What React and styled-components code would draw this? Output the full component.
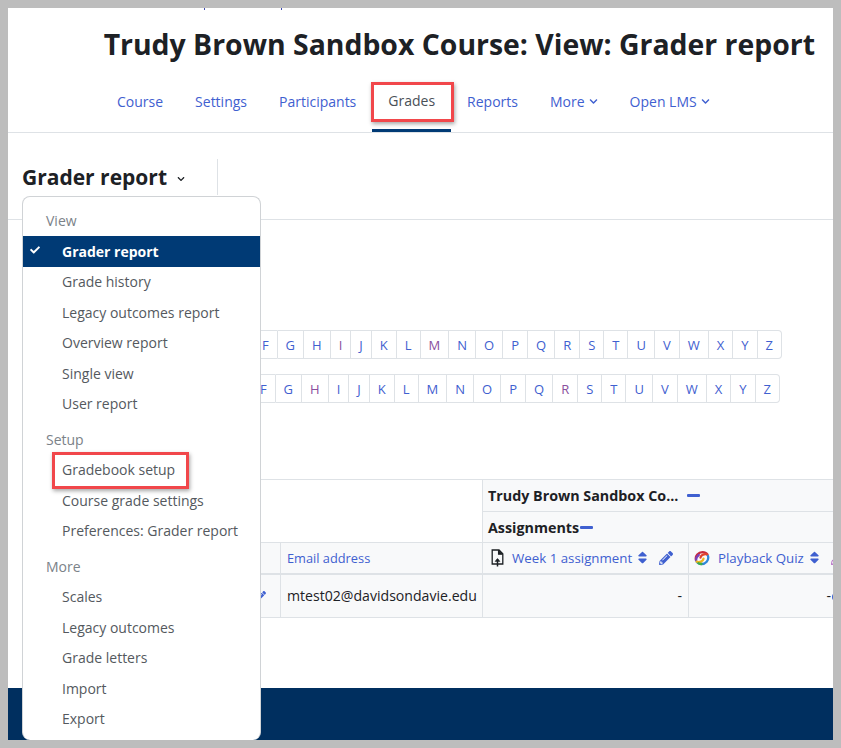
import React from 'react'
import styled, { createGlobalStyle } from 'styled-components'
import { FaCheck, FaChevronDown, FaPencilAlt, FaSort } from 'react-icons/fa'

const GlobalStyle = createGlobalStyle`
	html, body {
		margin: 0;
		padding: 0;
		background: #bdbdbd;
	}
	body {
		font-family: "Open Sans", "Noto Sans", "Liberation Sans", sans-serif;
		color: #1d2125;
	}
`

const LINK = '#3f60d0'

const Frame = styled.div`
	width: 841px;
	height: 748px;
	box-sizing: border-box;
	padding: 8px;
	background: #bdbdbd;
`

const Sheet = styled.div`
	position: relative;
	width: 825px;
	height: 732px;
	background: #fff;
	overflow: hidden;
	display: flex;
	flex-direction: column;
`

const Crumbs = styled.div`
	height: 3px;
	display: flex;
	gap: 76px;
	padding-left: 196px;
	span {
		width: 1px;
		height: 2px;
		background: #3f4bb0;
	}
`

const Heading = styled.h1`
	height: 61px;
	margin: 0;
	padding: 13px 18px 0 0;
	box-sizing: border-box;
	text-align: right;
	font-size: 28.4px;
	line-height: 40px;
	font-weight: 700;
	white-space: nowrap;
`

const Nav = styled.nav`
	height: 61px;
	box-sizing: border-box;
	border-bottom: 1px solid #dee2e6;
	padding-left: 93px;
	display: flex;
	align-items: stretch;
`

const Tab = styled.a`
	padding: 0 16px 2px;
	display: flex;
	align-items: center;
	gap: 4px;
	height: 60px;
	box-sizing: border-box;
	font-size: 14px;
	color: ${p => (p.$active ? '#495057' : LINK)};
	border-bottom: ${p => (p.$active ? '3px solid #003a75' : '0')};
	padding-top: ${p => (p.$active ? '1px' : '0')};
	svg {
		width: 9px;
		height: 9px;
		margin-top: 1px;
	}
`

const ReportBar = styled.div`
	position: relative;
	height: 87px;
	box-sizing: border-box;
	border-bottom: 1px solid #dee2e6;
	padding: 26px 0 0 14px;
	display: flex;
	align-items: flex-start;
`

const ReportTitle = styled.div`
	height: 36px;
	width: 196px;
	box-sizing: border-box;
	border-right: 1px solid #dee2e6;
	display: flex;
	align-items: center;
	gap: 10px;
	font-size: 21px;
	font-weight: 700;
	svg {
		width: 8px;
		height: 8px;
		margin-top: 3px;
	}
`

const Menu = styled.div`
	position: absolute;
	left: 14px;
	top: 63px;
	width: 239px;
	height: 544px;
	box-sizing: border-box;
	padding-top: 8px;
	background: #fff;
	border: 1px solid #d0d3d6;
	border-bottom: 0;
	border-radius: 8px;
	z-index: 2;
`

const MenuLabel = styled.div`
	height: 31px;
	margin-top: ${p => (p.$first ? '0' : '4.5px')};
	padding-left: 23px;
	display: flex;
	align-items: center;
	font-size: 14px;
	color: #7b8288;
`

const MenuItem = styled.div`
	position: relative;
	height: 30.5px;
	padding-left: 39px;
	display: flex;
	align-items: center;
	font-size: 14px;
	font-weight: ${p => (p.$active ? 700 : 400)};
	color: ${p => (p.$active ? '#fff' : '#54595e')};
	background: ${p => (p.$active ? '#003a75' : 'transparent')};
	svg {
		position: absolute;
		left: 7px;
		top: 9px;
		width: 10px;
		height: 10px;
	}
`

const Content = styled.div`
	padding-top: 110px;
	display: flex;
	flex-direction: column;
`

const LetterBar = styled.div`
	display: flex;
	justify-content: flex-end;
	margin-right: ${p => p.$right}px;
	margin-bottom: 15px;
`

const Letter = styled.a`
	height: 29px;
	box-sizing: border-box;
	padding: 0 8px;
	display: flex;
	align-items: center;
	font-size: 13px;
	color: ${p => (p.$visited ? '#8a4f9e' : LINK)};
	border: 1px solid #dee2e6;
	border-left-width: ${p => (p.$first ? '1px' : '0')};
	&:first-child {
		border-radius: 4px 0 0 4px;
	}
	&:last-child {
		border-radius: 0 4px 4px 0;
	}
`

const TableWrap = styled.div`
	margin: 61px 0 0 14px;
`

const Grades = styled.table`
	border-collapse: collapse;
	table-layout: fixed;
	width: 810px;
	font-size: 13.3px;
	td {
		border: 1px solid #dee2e6;
		padding: 0 6px 0 5px;
		box-sizing: border-box;
		white-space: nowrap;
		overflow: hidden;
	}
`

const Blank = styled.td`
	background: #fff;
`

const CategoryCell = styled.td`
	background: #f8f9fa;
	height: ${p => p.$height}px;
	font-weight: 700;
	font-size: 14.3px;
`

const HeadCell = styled.td`
	background: #f8f9fa;
	height: 31px;
	color: ${LINK};
	&& {
		border-bottom: 2px solid #dee2e6;
	}
`

const EmailHead = styled(HeadCell)`
	font-size: 12.8px;
	&& {
		padding-left: 6px;
	}
`

const BodyCell = styled.td`
	background: #f8f9fa;
	height: 44px;
	text-align: ${p => (p.$right ? 'right' : 'left')};
	font-size: 14.2px;
`

const EmailCell = styled(BodyCell)`
	font-size: 14.1px;
	&& {
		padding-left: 6px;
		padding-right: 0;
	}
`

const Collapse = styled.span`
	display: inline-block;
	width: 13px;
	height: 3px;
	margin-left: ${p => p.$gap}px;
	vertical-align: 4px;
	background: ${LINK};
	border-radius: 1px;
`

const HeadInner = styled.div`
	display: flex;
	align-items: center;
	svg {
		flex: none;
	}
`

const HeadLink = styled.span`
	margin-left: ${p => p.$gap}px;
`

const SortIcon = styled(FaSort)`
	width: 11px;
	height: 15px;
	margin-left: 5px;
`

const PencilIcon = styled(FaPencilAlt)`
	width: 14px;
	height: 14px;
	margin-left: 11px;
	color: ${p => p.$tint || LINK};
`

const RowPencil = styled(FaPencilAlt)`
	width: 10px;
	height: 10px;
	color: ${LINK};
	margin-left: -8px;
`

const Dot = styled.span`
	display: inline-block;
	width: 8px;
	height: 8px;
	margin-left: 1px;
	border-radius: 50%;
	background: ${LINK};
`

const Footer = styled.footer`
	height: 52px;
	margin-top: auto;
	background: #002f5f;
`

const Highlight = styled.div`
	position: absolute;
	left: ${p => p.$x}px;
	top: ${p => p.$y}px;
	width: ${p => p.$w}px;
	height: ${p => p.$h}px;
	box-sizing: border-box;
	border: 3px solid #f1474b;
	box-shadow: 1px 2px 4px rgba(0, 0, 0, 0.35);
	z-index: 3;
`

const UploadIcon = styled.svg`
	margin-left: 3px;
`

const LETTERS = [...'FGHIJKLMNOPQRSTUVWXYZ']
const REPORTS = ['Grade history', 'Legacy outcomes report', 'Overview report', 'Single view', 'User report']
const SETUP = ['Gradebook setup', 'Course grade settings', 'Preferences: Grader report']
const MORE = ['Scales', 'Legacy outcomes', 'Grade letters', 'Import', 'Export']

function LetterRow({ right, visited }) {
	return (
		<LetterBar $right={right}>
			{LETTERS.map((l, i) => (
				<Letter key={l} $first={i === 0} $visited={visited.includes(l)}>{l}</Letter>
			))}
		</LetterBar>
	)
}

export default function App() {
	return (
		<Frame>
			<GlobalStyle />
			<Sheet>
				<Crumbs><span /><span /></Crumbs>
				<Heading>Trudy Brown Sandbox Course: View: Grader report</Heading>
				<Nav>
					<Tab>Course</Tab>
					<Tab>Settings</Tab>
					<Tab>Participants</Tab>
					<Tab $active>Grades</Tab>
					<Tab>Reports</Tab>
					<Tab>More <FaChevronDown /></Tab>
					<Tab>Open LMS <FaChevronDown /></Tab>
				</Nav>
				<ReportBar>
					<ReportTitle>Grader report <FaChevronDown /></ReportTitle>
					<Menu>
						<MenuLabel $first>View</MenuLabel>
						<MenuItem $active><FaCheck />Grader report</MenuItem>
						{REPORTS.map(r => <MenuItem key={r}>{r}</MenuItem>)}
						<MenuLabel>Setup</MenuLabel>
						{SETUP.map(r => <MenuItem key={r}>{r}</MenuItem>)}
						<MenuLabel>More</MenuLabel>
						{MORE.map(r => <MenuItem key={r}>{r}</MenuItem>)}
					</Menu>
				</ReportBar>
				<Content>
					<LetterRow right={51} visited={['I', 'M']} />
					<LetterRow right={53} visited={['H', 'R']} />
					<TableWrap>
						<Grades>
							<colgroup>
								<col style={{ width: 236 }} />
								<col style={{ width: 22 }} />
								<col style={{ width: 202 }} />
								<col style={{ width: 206 }} />
								<col style={{ width: 158 }} />
							</colgroup>
							<tbody>
								<tr>
									<Blank colSpan={3} rowSpan={2} />
									<CategoryCell colSpan={2} $height={32}>Trudy Brown Sandbox Co...<Collapse $gap={9} /></CategoryCell>
								</tr>
								<tr>
									<CategoryCell colSpan={2} $height={31}>Assignments<Collapse $gap={1} /></CategoryCell>
								</tr>
								<tr>
									<HeadCell />
									<HeadCell />
									<EmailHead>Email address</EmailHead>
									<HeadCell>
										<HeadInner>
											<UploadIcon width="13" height="18" viewBox="0 0 13 18" fill="none" stroke="#1d2125" strokeWidth="1.3">
												<path d="M1.2 1h6.8l3.800 3.800v10.200H1.200z" />
												<path d="M7.600 1v4.200h4.200" fill="#1d2125" />
												<path d="M6.500 17.500V10" strokeWidth="1.500" />
												<path d="M4 12.400l2.500-3 2.500 3z" fill="#1d2125" strokeWidth="0.500" />
											</UploadIcon>
											<HeadLink $gap={8}>Week 1 assignment</HeadLink>
											<SortIcon />
											<PencilIcon />
										</HeadInner>
									</HeadCell>
									<HeadCell>
										<HeadInner>
											<svg width="16" height="16" viewBox="0 0 16 16" fill="none" strokeWidth="2.300" strokeLinecap="round">
												<path d="M2 10C.8 5.500 4.500 2.200 8.500 2.200c2 0 3.800.8 4.800 2.300" stroke="#c72a3d" />
												<path d="M2 10c.2-2.500 1.400-4 2.800-5" stroke="#7b3fb8" />
												<path d="M13.300 4.500C10.500 3.500 7 4.800 6.500 7.500" stroke="#e0442e" />
												<path d="M14 6c1.200 4.500-2.500 8-6.500 8-2 0-3.800-.8-4.800-2.300" stroke="#2f86d9" />
												<path d="M2.700 11.700c2.800 1 6.300-.3 6.800-3" stroke="#f0b31e" />
												<path d="M4.500 13.200c1 .6 2 .8 3 .8" stroke="#3dae4c" />
											</svg>
											<HeadLink $gap={8}>Playback Quiz</HeadLink>
											<SortIcon />
											<PencilIcon $tint="#b56ac4" />
										</HeadInner>
									</HeadCell>
								</tr>
								<tr>
									<BodyCell />
									<BodyCell><RowPencil /></BodyCell>
									<EmailCell>mtest02@davidsondavie.edu</EmailCell>
									<BodyCell $right>-</BodyCell>
									<BodyCell $right>-<Dot /></BodyCell>
								</tr>
							</tbody>
						</Grades>
					</TableWrap>
				</Content>
				<Footer />
				<Highlight $x={363} $y={74} $w={83} $h={40} />
				<Highlight $x={44} $y={444} $w={137} $h={37} />
			</Sheet>
		</Frame>
	)
}
